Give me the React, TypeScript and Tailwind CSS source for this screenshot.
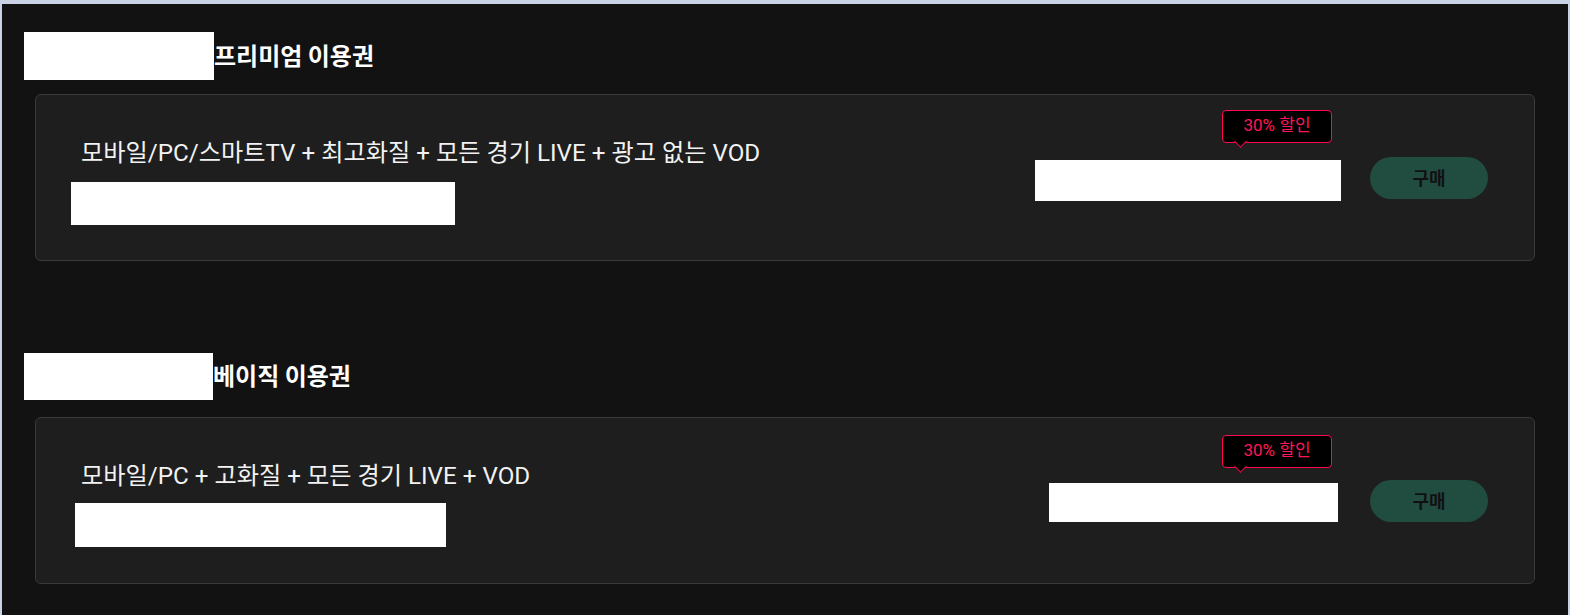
import React from "react";

// ─── Types ────────────────────────────────────────────────────────
interface Plan {
  title: string;
  desc: string;
  head: { w: number; h: number; cardMt: string };
  subBox: { w: number; h: number; cls: string };
  price: { w: number; h: number; mt: string };
}

const plans: Plan[] = [
  {
    title: "프리미엄 이용권",
    desc: "모바일/PC/스마트TV + 최고화질 + 모든 경기 LIVE + 광고 없는 VOD",
    head: { w: 190, h: 48, cardMt: "mt-[14px]" },
    subBox: { w: 384, h: 43, cls: "ml-[-10px] mt-[14px]" },
    price: { w: 306, h: 41, mt: "mt-[5px] mr-[29px]" },
  },
  {
    title: "베이직 이용권",
    desc: "모바일/PC + 고화질 + 모든 경기 LIVE + VOD",
    head: { w: 189, h: 47, cardMt: "mt-[17px]" },
    subBox: { w: 371, h: 44, cls: "ml-[-6px] mt-[12px]" },
    price: { w: 289, h: 39, mt: "mt-[3px] mr-[32px]" },
  },
];

// ─── PlanCard ─────────────────────────────────────────────────────
function PlanCard({ plan }: { plan: Plan }) {
  return (
    <section>
      <div className="flex items-center pl-[22px]">
        <div
          className="bg-white"
          style={{ width: plan.head.w, height: plan.head.h }}
        />
        <h2 className="text-[24px] font-bold leading-[30px] text-white mt-[-3px]">
          {plan.title}
        </h2>
      </div>

      <div
        className={`mx-[33px] ${plan.head.cardMt} h-[167px] rounded-md border border-[#3a3a3a] bg-[#1e1e1e] flex items-center justify-between pl-[45px] pr-[46px]`}
      >
        <div className="flex flex-col pt-[7px]">
          <p className="text-[24.2px] leading-[30px] text-[#f2f2f2] font-['Roboto','Noto_Sans_CJK_KR',sans-serif]">
            {plan.desc}
          </p>
          <div
            className={`bg-white ${plan.subBox.cls}`}
            style={{ width: plan.subBox.w, height: plan.subBox.h }}
          />
        </div>

        <div className="relative flex items-center">
          <div
            className={`bg-white ${plan.price.mt}`}
            style={{ width: plan.price.w, height: plan.price.h }}
          />
          <button className="w-[118px] h-[42px] rounded-full bg-[#214d40] text-[18px] font-bold text-[#111]">
            구매
          </button>
          <div className="absolute right-[156px] top-[-45px] w-[110px] h-[33px] rounded-[4px] border border-[#ff0a50] bg-black flex items-center justify-center text-[17px] text-[#ff1656] font-['Roboto','Noto_Sans_CJK_KR',sans-serif]">
            30% 할인
            <span className="absolute left-[13px] top-full mt-[-5px] w-[9px] h-[9px] rotate-45 bg-black border-r border-b border-[#ff0a50]" />
          </div>
        </div>
      </div>
    </section>
  );
}

// ─── App ──────────────────────────────────────────────────────────
export default function App() {
  return (
    <div className="min-h-[615px] bg-[#c9d3e3] pt-[4px] pl-[2px] pr-[2px] font-['Noto_Sans_CJK_KR',sans-serif]">
      <div className="bg-[#121212] h-[611px] pt-[28px] flex flex-col gap-[92px]">
        {plans.map((p, i) => (
          <PlanCard key={i} plan={p} />
        ))}
      </div>
    </div>
  );
}
